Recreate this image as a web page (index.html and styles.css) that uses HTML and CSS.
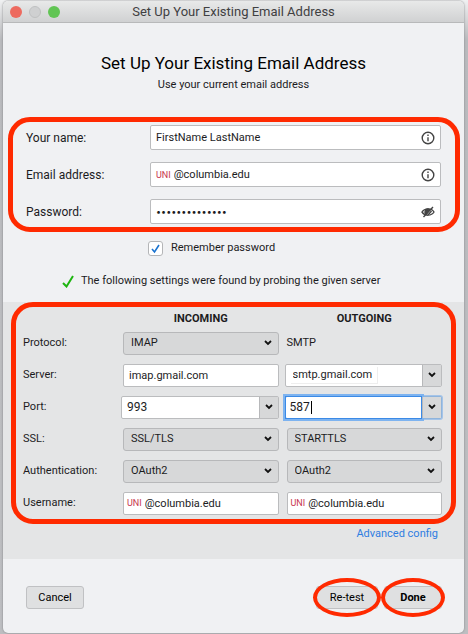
FILE: index.html
```
<!DOCTYPE html>
<html lang="en">
    <head>
        <meta charset="utf-8">
        <meta name="viewport" content="width=device-width, initial-scale=1">
        <title>Set Up Your Existing Email Address</title>
        <link rel="stylesheet" href="styles.css">
    </head>
    <body>
        <div class="window">
            <div class="titlebar">
                <div class="lights">
                    <span class="light red"></span>
                    <span class="light grey"></span>
                    <span class="light green"></span>
                </div>
                <div class="title">Set Up Your Existing Email Address</div>
            </div>

            <form action="" method="get">
                <header>
                    <h1>Set Up Your Existing Email Address</h1>
                    <p>Use your current email address</p>
                </header>

                <!-- account -->
                <div class="marked account">
                    <div class="row">
                        <label for="name">Your name:</label>
                        <div class="field">
                            <input type="text" id="name" value="FirstName LastName">
                            <svg class="icon" viewBox="0 0 14 14"><circle cx="7" cy="7" r="5.8"/><path d="M7 6.2v4M7 3.6v1.4"/></svg>
                        </div>
                    </div>
                    <div class="row">
                        <label for="email">Email address:</label>
                        <div class="field">
                            <span class="uni">UNI</span>
                            <input type="text" id="email" value="@columbia.edu">
                            <svg class="icon" viewBox="0 0 14 14"><circle cx="7" cy="7" r="5.8"/><path d="M7 6.2v4M7 3.6v1.4"/></svg>
                        </div>
                    </div>
                    <div class="row">
                        <label for="password">Password:</label>
                        <div class="field">
                            <input type="text" id="password" class="dots" value="••••••••••••••">
                            <svg class="icon eye" viewBox="0 0 14 14"><path d="M1 7.2C3.5 2.800 10.500 2.800 13 7C10.500 11.200 3.500 11.200 1 7.200z"/><path class="solid" d="M5 5A3 3 0 0 0 5 9.500L8.500 4.500A3 3 0 0 0 5 5z"/><path d="M2.500 12L12 2M7 10L10.500 6"/></svg>
                        </div>
                    </div>
                </div>

                <div class="remember">
                    <input type="checkbox" id="remember" checked>
                    <label for="remember">Remember password</label>
                </div>

                <div class="status">
                    <svg class="tick" viewBox="0 0 12 13"><path d="M1 8l3.500 3.500L11 1"/></svg>
                    <span>The following settings were found by probing the given server</span>
                </div>

                <!-- server settings -->
                <div class="settings">
                    <div class="marked servers">
                        <div class="heads">
                            <span></span>
                            <b>INCOMING</b>
                            <b>OUTGOING</b>
                        </div>
                        <div class="line">
                            <label for="protocol">Protocol:</label>
                            <select id="protocol"><option>IMAP</option></select>
                            <span class="plain">SMTP</span>
                        </div>
                        <div class="line">
                            <label for="server">Server:</label>
                            <div class="field"><input type="text" id="server" value="imap.gmail.com"></div>
                            <div class="field combo">
                                <input type="text" class="boxed" aria-label="Outgoing server" value="smtp.gmail.com">
                                <button type="button" class="drop" aria-label="Show servers"></button>
                            </div>
                        </div>
                        <div class="line">
                            <label for="port">Port:</label>
                            <div class="field combo port">
                                <input type="text" id="port" value="993">
                                <button type="button" class="drop" aria-label="Show ports"></button>
                            </div>
                            <div class="field combo port active">
                                <div class="entry">
                                    <input type="text" class="short" aria-label="Outgoing port" value="587">
                                    <span class="caret"></span>
                                </div>
                                <button type="button" class="drop" aria-label="Show ports"></button>
                            </div>
                        </div>
                        <div class="line">
                            <label for="ssl">SSL:</label>
                            <select id="ssl"><option>SSL/TLS</option></select>
                            <select aria-label="Outgoing SSL"><option>STARTTLS</option></select>
                        </div>
                        <div class="line">
                            <label for="auth">Authentication:</label>
                            <select id="auth"><option>OAuth2</option></select>
                            <select aria-label="Outgoing authentication"><option>OAuth2</option></select>
                        </div>
                        <div class="line">
                            <label for="user">Username:</label>
                            <div class="field tight">
                                <span class="uni">UNI</span>
                                <input type="text" id="user" value="@columbia.edu">
                            </div>
                            <div class="field tight">
                                <span class="uni">UNI</span>
                                <input type="text" aria-label="Outgoing username" value="@columbia.edu">
                            </div>
                        </div>
                    </div>
                    <a class="advanced" href="#">Advanced config</a>
                </div>

                <footer>
                    <button type="button">Cancel</button>
                    <button type="button" class="circled first">Re-test</button>
                    <button type="submit" class="circled done">Done</button>
                </footer>
            </form>
        </div>
    </body>
</html>
```
FILE: styles.css
```
* {
    box-sizing: border-box;
}
body {
    margin: 0;
    padding: 1px 4px 2px 3px;
    min-height: 100vh;
    background: linear-gradient(#f0f1f2, #b9babd 40px, #bdbec1);
    font-family: Roboto, "Liberation Sans", sans-serif;
    font-size: 11px;
    line-height: 16px;
    color: #1c1c1e;
}
input, select, button {
    font: inherit;
    color: inherit;
}
.window {
    background: #f0f1f3;
    border-radius: 5px;
    overflow: hidden;
    box-shadow: 0 0 2px #77787a;
}

/* title bar */
.titlebar {
    display: grid;
    grid-template-columns: 60px 1fr 60px;
    align-items: center;
    height: 22px;
    padding: 0 7px;
    background: linear-gradient(#e8e9e9, #d0d1d2);
    border-bottom: 1px solid #b8b9ba;
}
.lights {
    display: flex;
    gap: 7px;
}
.light {
    width: 12px;
    height: 12px;
    border-radius: 50%;
}
.red {
    background: #ed6a5f;
}
.grey {
    background: #cfd0d1;
    border: 1px solid #bfc0c1;
}
.green {
    background: #61c554;
}
.title {
    text-align: center;
    font-size: 13px;
    color: #3f4042;
    white-space: nowrap;
}

header {
    padding: 28px 0 24px;
    text-align: center;
}
h1 {
    margin: 0;
    font-size: 17px;
    line-height: 24px;
    font-weight: 400;
    color: #000;
}
header p {
    margin: 2px 0 0;
}

/* red rounded frames */
.marked {
    border: 5px solid #ff2a00;
    border-radius: 22px;
}
.account {
    display: flex;
    flex-direction: column;
    gap: 12px;
    margin: 0 4px 0 5px;
    padding: 3px 14px 3px 13px;
}
.account label {
    font-size: 12px;
}
.row {
    display: grid;
    grid-template-columns: 124px 1fr;
    align-items: center;
}
.field {
    display: flex;
    align-items: center;
    min-width: 0;
    height: 23px;
    background: #fff;
    border: 1px solid #bbbcbe;
    border-radius: 2px;
    padding: 0 5px;
}
.row .field {
    height: 25px;
}
.field input {
    flex: 1;
    min-width: 0;
    width: 100%;
    height: 100%;
    padding: 0;
    border: 0;
    background: none;
    outline: none;
}
.uni {
    margin-right: 3px;
    font-size: 9px;
    color: #c8354d;
}
.field .dots {
    font-family: Inter, sans-serif;
    font-size: 9px;
}
.icon {
    width: 14px;
    height: 14px;
    fill: none;
    stroke: #444;
    stroke-width: 1.4;
}
.icon .solid {
    fill: #444;
}

.remember {
    display: flex;
    align-items: center;
    gap: 8px;
    padding: 8px 0 0 145px;
}
.remember input {
    appearance: none;
    width: 15px;
    height: 15px;
    margin: 0;
    border: 1px solid #b4b5b7;
    border-radius: 3px;
    background: #fff url("data:image/svg+xml,%3Csvg xmlns='http://www.w3.org/2000/svg' viewBox='0 0 13 13'%3E%3Cpath d='M3 7l2.500 3L10 3' fill='none' stroke='%231a73d0' stroke-width='1.600'/%3E%3C/svg%3E");
}
.status {
    display: flex;
    align-items: center;
    gap: 7px;
    padding: 17px 0 13px 59px;
}
.tick {
    width: 12px;
    height: 13px;
    fill: none;
    stroke: #1db510;
    stroke-width: 2;
}

/* server settings */
.settings {
    display: flex;
    flex-direction: column;
    align-items: stretch;
    padding-bottom: 17px;
    background: #e4e5e6;
}
.servers {
    margin: 0 8px;
    padding: 4px 9px 0 7px;
}
.heads, .line {
    display: grid;
    grid-template-columns: 92px 1fr 1fr;
    column-gap: 8px;
    align-items: center;
}
.heads b {
    text-align: center;
    font-weight: 700;
}
.line {
    height: 32px;
}
select {
    appearance: none;
    width: 100%;
    height: 23px;
    padding: 0 7px;
    border: 1px solid #b7b8ba;
    border-radius: 3px;
    background: #d7d8d9 url("data:image/svg+xml,%3Csvg xmlns='http://www.w3.org/2000/svg' viewBox='0 0 8 6'%3E%3Cpath d='M1 1l3 3 3-3' fill='none' stroke='%23111' stroke-width='1.800'/%3E%3C/svg%3E") no-repeat right 6px center / 8px 6px;
}
.combo {
    margin-left: -2px;
    padding-right: 0;
}
.port {
    font-size: 12px;
}
.drop {
    flex: none;
    align-self: stretch;
    width: 19px;
    padding: 0;
    border: 0;
    border-left: 1px solid #b7b8ba;
    background: #d7d8d9 url("data:image/svg+xml,%3Csvg xmlns='http://www.w3.org/2000/svg' viewBox='0 0 8 6'%3E%3Cpath d='M1 1l3 3 3-3' fill='none' stroke='%23111' stroke-width='1.800'/%3E%3C/svg%3E") no-repeat center / 8px 6px;
}
.field .boxed {
    flex: none;
    width: 87px;
    height: 17px;
    margin-right: auto;
    padding-left: 2px;
    border: solid #eee;
    border-width: 0 1px 1px 0;
}
.active {
    padding: 0;
    border-color: #8fb4dc;
    box-shadow: 0 0 0 1px #a5c4e8;
}
.entry {
    display: flex;
    flex: 1;
    align-items: center;
    height: 23px;
    margin-left: -1px;
    padding-left: 4px;
    border: 1px solid #3b8ae6;
    box-shadow: 0 0 0 2px #7db3f0;
}
.field .short {
    flex: none;
    width: 21px;
}
.caret {
    width: 1px;
    height: 13px;
    background: #000;
}
.tight {
    padding: 0 3px;
}
.advanced {
    align-self: flex-end;
    margin: 2px 26px 0 0;
    color: #2f7de1;
    text-decoration: none;
}

footer {
    display: flex;
    align-items: center;
    gap: 6px;
    padding: 27px 22px 24px 23px;
}
footer button {
    position: relative;
    height: 23px;
    min-width: 58px;
    padding: 0 8px;
    border: 1px solid #c0c1c3;
    border-radius: 3px;
    background: #dfe0e1;
    color: #000;
}
.first {
    min-width: 62px;
    margin-left: auto;
}
.done {
    font-weight: 700;
}
.circled::after {
    content: "";
    position: absolute;
    inset: -9px -4px;
    border: 4px solid #ff2a00;
    border-radius: 50%;
}
```
